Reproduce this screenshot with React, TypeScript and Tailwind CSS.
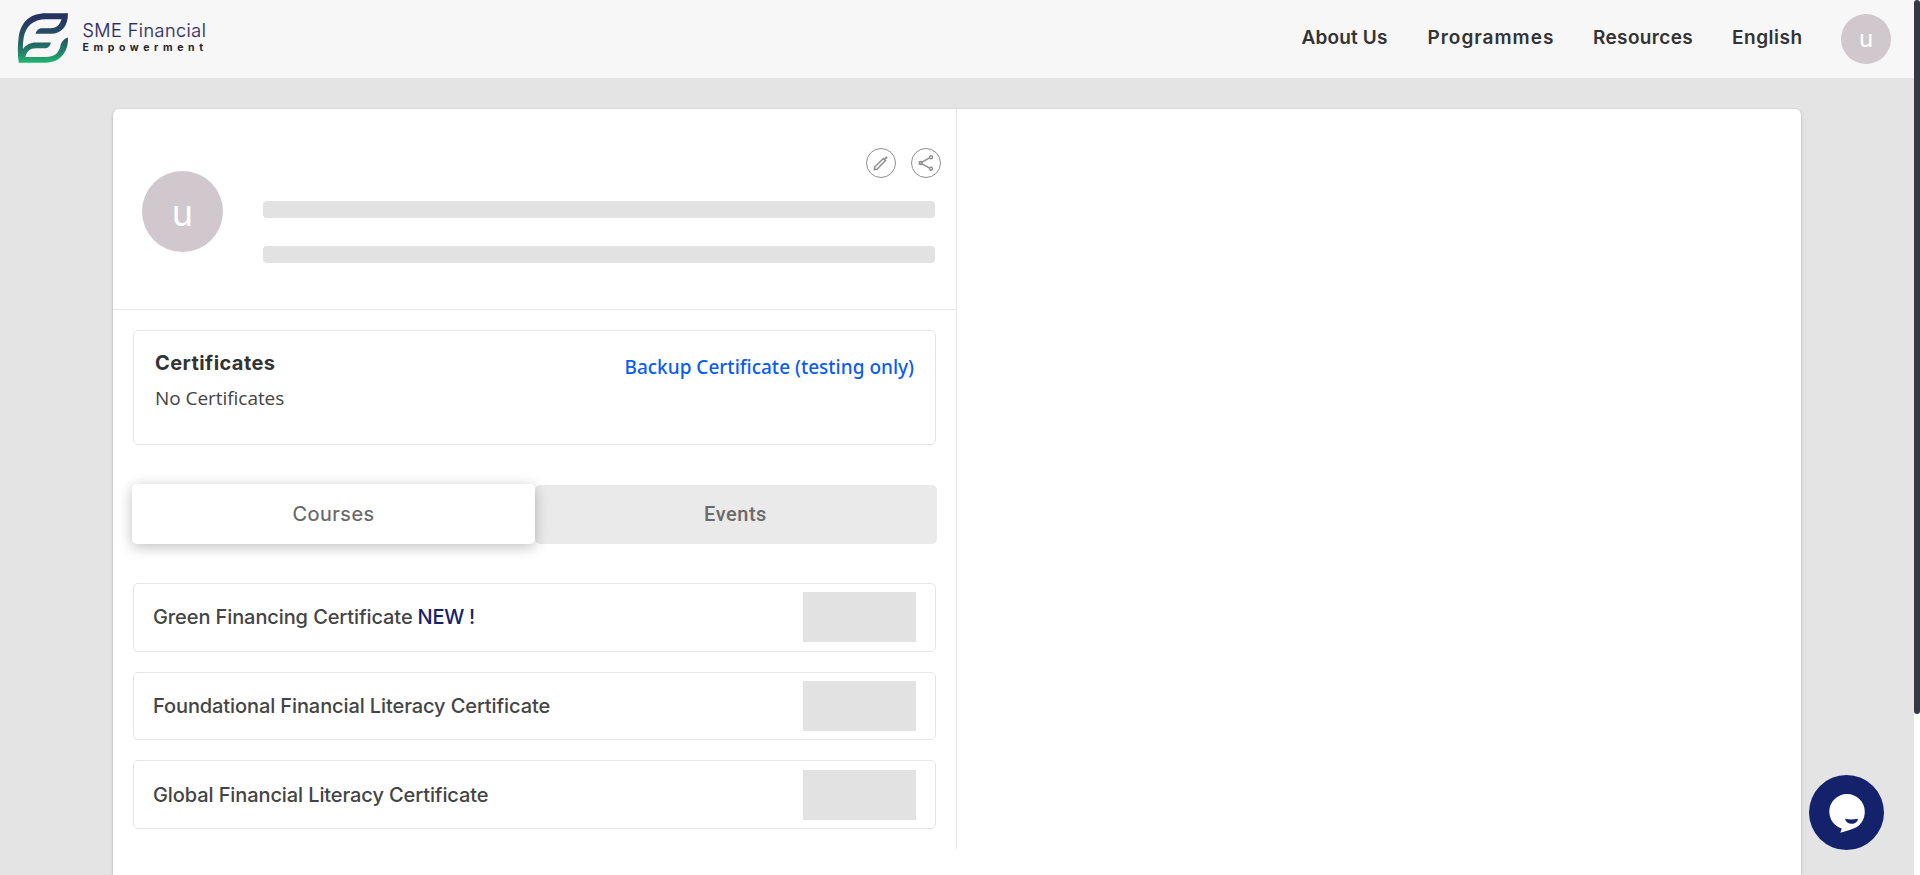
import React from "react";

const navItems = [
  { label: "About Us", style: "w-[126px] tracking-[0.15px]" },
  { label: "Programmes", style: "w-[165.5px] tracking-[0.98px]" },
  { label: "Resources", style: "w-[139px] tracking-[0.35px]" },
  { label: "English", style: "w-[109px] tracking-[0.5px]" },
];

const courses = [
  { title: "Green Financing Certificate", isNew: true },
  { title: "Foundational Financial Literacy Certificate", isNew: false },
  { title: "Global Financial Literacy Certificate", isNew: false },
];

function Logo() {
  return (
    <div className="flex items-start">
      <svg className="mt-[13px] ml-[17px] h-[50px] w-[52px]" viewBox="17 13 52 50" fill="none">
        <defs>
          <linearGradient id="leaf" x1="0" y1="13" x2="0" y2="63" gradientUnits="userSpaceOnUse">
            <stop offset="0" stopColor="#25305f" />
            <stop offset="0.2" stopColor="#263a62" />
            <stop offset="0.62" stopColor="#246765" />
            <stop offset="0.82" stopColor="#248a68" />
            <stop offset="1" stopColor="#20b96f" />
          </linearGradient>
        </defs>
        <path
          fill="url(#leaf)"
          d="M18.7 62.7C17.6 54 17.5 46 18.6 38C20.6 22 30 13.3 46 13.3H68C68 26 62 33.8 51 33.8H35.6C36.4 30.5 38.6 28.2 42 28.2H50C56 28.2 60 25 61.5 19.2H46C33 19.2 25.5 26.5 23.6 38C23 42 22.8 46 23 49C26 44.8 30.2 42.4 36 42.4H50.8C50.2 46 48 48.2 44.5 48.2H36C30 48.2 26.5 51.5 25.5 57H46C54 57 58.5 53.5 60.3 46.5C61.2 42.2 63.8 38.8 68 37.6C68.6 52 60 62.7 46 62.7Z"
        />
      </svg>
      <div className="ml-[13.5px] mt-[20px] flex flex-col font-['Inter']">
        <span className="h-[21px] whitespace-nowrap text-[18px] font-light leading-[21px] tracking-[0.48px] text-[#302b63] [-webkit-text-stroke:0.2px_#302b63]">
          SME Financial
        </span>
        <span className="mt-px h-[12px] whitespace-nowrap text-[10.5px] font-bold leading-[12px] tracking-[4.6px] text-[#292529]">
          Empowerment
        </span>
      </div>
    </div>
  );
}

function Header() {
  return (
    <header className="flex h-[78px] justify-between bg-[#f7f7f7]">
      <Logo />
      <nav className="flex items-center pr-[23px]">
        {navItems.map((item) => (
          <a
            key={item.label}
            className={`${item.style} whitespace-nowrap pb-[2px] font-['Inter'] text-[19px] font-semibold leading-6 text-[#333]`}
          >
            {item.label}
          </a>
        ))}
        <div className="flex size-[50px] items-center justify-center rounded-full bg-[#d0c8cd] font-['Inter'] text-[24px] leading-none text-white">
          u
        </div>
      </nav>
    </header>
  );
}

function CircleButton({ label, children }: { label: string; children: React.ReactNode }) {
  return (
    <button
      aria-label={label}
      className="flex size-[30px] items-center justify-center rounded-full border border-[#8f8f8f] text-[#8f8f8f]"
    >
      {children}
    </button>
  );
}

function Profile() {
  return (
    <section className="flex h-[201px] border-b border-[#e6e6e6] pl-[29px] pr-[15px]">
      <div className="mt-[62px] flex size-[81px] shrink-0 items-center justify-center rounded-full bg-[#d0c8cd] pt-[3px] font-['Inter'] text-[36px] leading-none text-white">
        u
      </div>
      <div className="ml-[40px] flex flex-1 flex-col pt-[39px]">
        <div className="flex justify-end gap-[15px]">
          <CircleButton label="Edit">
            <svg className="size-4" viewBox="0 0 16 16" fill="none" stroke="currentColor" strokeWidth="1.5">
              <path d="M1.3 14.7L1.7 12L10.4 3.5L12.5 5.6L4 14.3Z" />
              <path d="M12.3 2.3L13.7 3.7" strokeWidth="3" />
            </svg>
          </CircleButton>
          <CircleButton label="Share">
            <svg className="size-4" viewBox="0 0 16 16" fill="none" stroke="currentColor" strokeWidth="1.4">
              <path d="M4 7.2L11.6 2.9M4 8.8L11.6 13.1" />
              <circle cx="2.7" cy="8" r="1.4" strokeWidth="1.7" />
              <circle cx="13" cy="2.2" r="1.5" />
              <circle cx="13" cy="13.8" r="1.5" />
            </svg>
          </CircleButton>
        </div>
        <div className="mr-[6px] mt-[23px] h-[17px] rounded-[4px] bg-[#e2e2e2]" />
        <div className="mr-[6px] mt-[28px] h-[17px] rounded-[4px] bg-[#e2e2e2]" />
      </div>
    </section>
  );
}

function Certificates() {
  return (
    <section className="mt-5 flex h-[115px] justify-between rounded-[5px] border border-[#e6e6e6] pl-[21px] pr-[21px]">
      <div>
        <h2 className="mt-[18px] font-['Inter'] text-[20px] font-bold leading-[28px] tracking-[0.42px] text-[#333]">
          Certificates
        </h2>
        <p className="mt-[7px] font-['Open_Sans'] text-[19px] leading-[28px] tracking-[-0.05px] text-[#444]">
          No Certificates
        </p>
      </div>
      <a className="mt-[22px] h-[28px] whitespace-nowrap font-['Noto_Sans'] text-[19px] font-medium leading-[28px] text-[#0b5cf0]">
        Backup Certificate (testing only)
      </a>
    </section>
  );
}

function Tabs() {
  return (
    <div className="-ml-px -mr-px mt-[39px] flex h-[60px] items-center">
      <button className="relative h-[60px] w-[403px] rounded-[5px] bg-white font-['Inter'] text-[20px] leading-[24px] tracking-[0.5px] text-[#666] shadow-[0_3px_14px_rgba(0,0,0,0.25)] [-webkit-text-stroke:0.2px_#666]">
        Courses
      </button>
      <button className="h-[59px] flex-1 rounded-[5px] bg-[#eaeaea] pr-[1px] font-['Roboto'] text-[20px] font-medium leading-[24px] tracking-[0.53px] text-[#6b6b6b]">
        Events
      </button>
    </div>
  );
}

function CourseList() {
  return (
    <ul className="mt-[39px] flex flex-col gap-[20px]">
      {courses.map((course) => (
        <li
          key={course.title}
          className="flex h-[68.7px] items-center justify-between rounded-[5px] border border-[#e6e6e6] pl-[19px] pr-[19px]"
        >
          <span className="whitespace-pre font-['Inter'] text-[20px] font-medium leading-[24px] tracking-[-0.1px] text-[#444]">
            {course.title}
            {course.isNew && <span className="tracking-[-0.3px] text-[#14216b]"> NEW !</span>}
          </span>
          <div className="h-[50px] w-[113px] bg-[#e2e2e2]" />
        </li>
      ))}
    </ul>
  );
}

function ChatButton() {
  return (
    <button aria-label="Chat" className="absolute left-[1809px] top-[775px] size-[75px] rounded-full bg-[#14216b]">
      <svg className="size-[75px]" viewBox="0 0 75 75">
        <path
          fill="#fff"
          d="M38 19C47.9 19 55.8 26.9 55.8 36.7C55.8 43 52.5 49.5 47.5 52.2C43 54.5 37 55.7 31.3 57.8L32.8 53.5C25.5 51.3 20.3 44.5 20.3 36.7C20.3 26.9 28.2 19 38 19Z"
        />
        <path fill="#14216b" d="M36 43.8Q42.3 45 49 43.8C48.6 47 46 48.8 42.7 48.8C39.4 48.8 36.7 47 36 43.8Z" />
      </svg>
    </button>
  );
}

export default function App() {
  return (
    <div className="relative flex h-[875px] w-[1920px] overflow-hidden bg-white">
      <div className="flex w-[1914px] flex-col">
        <Header />
        <main className="flex-1 bg-[#e4e4e4] pl-[113px] pt-[31px]">
          <div className="flex h-[766px] w-[1688px] items-start rounded-t-[6px] bg-white shadow-[0_1px_3px_rgba(40,40,60,0.3)]">
            <div className="h-[740px] w-[844px] border-r border-[#e6e6e6]">
              <Profile />
              <div className="pl-5 pr-5">
                <Certificates />
                <Tabs />
                <CourseList />
              </div>
            </div>
          </div>
        </main>
      </div>
      <div className="h-[714px] w-[6px] rounded-[3px] bg-[#343a43]" />
      <ChatButton />
    </div>
  );
}
